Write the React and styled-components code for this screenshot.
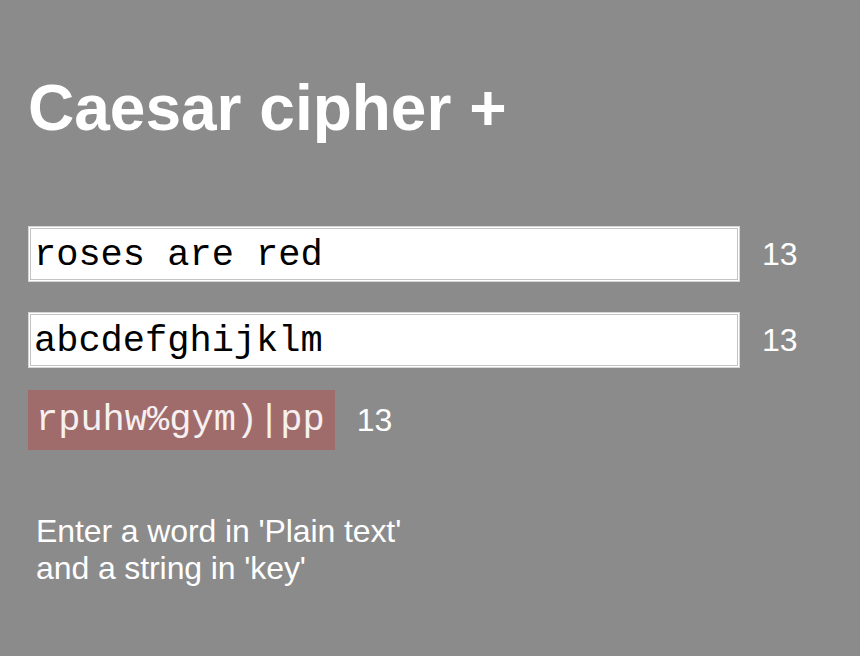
import React from 'react';
import styled, { createGlobalStyle } from 'styled-components';

const GlobalStyle = createGlobalStyle`
    html, body {
        margin : 0;
        padding : 0;
        background : #8b8b8b;
        font-family : "Liberation Sans", Arial, sans-serif;
        color : #fff;
    }
`;

const Page = styled.div`
    min-height : 656px;
    padding : 71px 28px 0;
    box-sizing : border-box;
`;

const Title = styled.h1`
    margin : 0 0 81px;
    font-size : 64px;
    line-height : 74px;
    font-weight : bold;
    color : #fff;
`;

const Row = styled.div`
    display : flex;
    align-items : center;
    gap : 22px;
    margin-bottom : ${({ gap }) => gap};
`;

const TextInput = styled.input`
    box-sizing : border-box;
    width : 712px;
    height : 56px;
    padding : 2px 0 0 5px;
    border : 1px solid #d6d6d6;
    box-shadow : inset 0 0 0 1px #fff, inset 0 0 0 2px #c4c4c4;
    background : #fff;
    color : #000;
    font-family : "Liberation Mono", "Courier New", monospace;
    font-size : 37px;
    outline : none;
`;

const Output = styled.div`
    box-sizing : border-box;
    height : 60px;
    display : flex;
    align-items : center;
    padding : 0 10px 0 8px;
    background : #a06b6b;
    color : #f6f0f0;
    font-family : "Liberation Mono", "Courier New", monospace;
    font-size : 37px;
    white-space : pre;
`;

const Count = styled.span`
    font-size : 32px;
    color : #fff;
`;

const Hint = styled.p`
    margin : 63px 0 0;
    padding-left : 8px;
    font-size : 32px;
    line-height : 37px;
    letter-spacing : -0.1px;
    color : #fff;
`;

const shift = (text, key) =>
    text.split('').map((c, i) => String.fromCharCode(c.charCodeAt(0) + (key.charCodeAt(i % key.length) - 97))).join('');

const App = () => {
    const [plain, setPlain] = React.useState('roses are red');
    const [key, setKey] = React.useState('abcdefghijklm');
    const cipher = shift(plain, key);
    return (
        <Page>
            <GlobalStyle />
            <Title>Caesar cipher +</Title>
            <Row gap="30px">
                <TextInput value={plain} onChange={(e) => setPlain(e.target.value)} />
                <Count>{plain.length}</Count>
            </Row>
            <Row gap="22px">
                <TextInput value={key} onChange={(e) => setKey(e.target.value)} />
                <Count>{key.length}</Count>
            </Row>
            <Row>
                <Output>{cipher}</Output>
                <Count>{cipher.length}</Count>
            </Row>
            <Hint>
                Enter a word in 'Plain text'<br />
                and a string in 'key'
            </Hint>
        </Page>
    );
};

export default App;
